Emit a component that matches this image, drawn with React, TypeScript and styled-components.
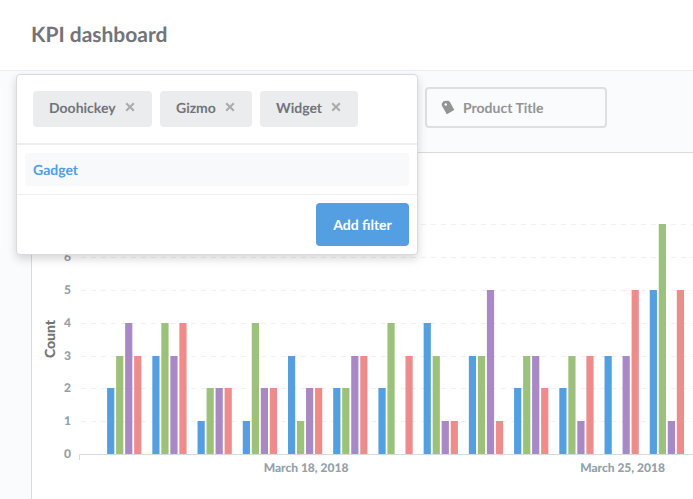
import React from "react";
import styled, { createGlobalStyle } from "styled-components";

const GlobalStyle = createGlobalStyle`
  *, *::before, *::after { box-sizing: border-box; }
  body {
    margin: 0;
    overflow: hidden;
    background: #f9fbfc;
    font-family: Lato, "Liberation Sans", sans-serif;
    font-weight: 700;
    text-rendering: geometricPrecision;
  }
`;

const Page = styled.div`
  position: relative;
  width: 693px;
  height: 499px;
  overflow: hidden;
  display: flex;
  flex-direction: column;
  background: #f9fbfc;
`;

const Header = styled.header`
  flex: none;
  height: 71px;
  padding: 22px 31px 0;
  background: #fff;
  border-bottom: 1px solid #edeeef;
`;

const Title = styled.h1`
  margin: 0;
  font-size: 21px;
  line-height: 26px;
  color: #727479;
`;

const FilterBar = styled.div`
  flex: none;
  height: 81px;
  padding-top: 16px;
  padding-left: 425px;
`;

const FilterField = styled.div`
  display: flex;
  align-items: center;
  gap: 8px;
  width: 182px;
  height: 41px;
  padding-left: 14px;
  border: 2px solid #dddfe0;
  border-radius: 4px;
  font-size: 14px;
  color: #949494;
`;

const Card = styled.section`
  flex: 1;
  margin-left: 31px;
  border: solid #d9dadb;
  border-width: 1px 0 0 1px;
  background: #fff;
`;

const Chart = styled.svg`
  display: block;
  font-family: Lato, "Liberation Sans", sans-serif;
  font-weight: 900;
`;

const Popover = styled.div`
  position: absolute;
  left: 16px;
  top: 74px;
  width: 402px;
  height: 181px;
  background: #fff;
  border: 1px solid #d9dadb;
  border-radius: 4px;
  box-shadow: 0 4px 10px rgba(0, 0, 0, 0.16);
`;

const Chips = styled.div`
  display: flex;
  gap: 8px;
  height: 70px;
  padding: 16px 16px 0;
  border-bottom: 2px solid #eeeff0;
`;

const Chip = styled.div<{ $width: number }>`
  display: flex;
  justify-content: space-between;
  width: ${(p) => p.$width}px;
  height: 36px;
  padding: 0 17px 0 16px;
  line-height: 34px;
  border-radius: 4px;
  background: #ebecee;
  color: #727479;
  font-size: 14px;
`;

const CloseIcon = styled.svg`
  display: block;
  margin-top: 11px;
`;

const Options = styled.div`
  height: 50px;
  padding: 8px;
  border-bottom: 1px solid #edeeef;
`;

const Option = styled.div`
  height: 33px;
  padding-left: 8px;
  border-radius: 4px;
  background: #f8f9fb;
  color: #519ee3;
  font-size: 14px;
  line-height: 34px;
`;

const Footer = styled.div`
  display: flex;
  justify-content: flex-end;
  padding: 8px;
`;

const AddButton = styled.button`
  width: 93px;
  height: 43px;
  padding: 0;
  border: 0;
  border-radius: 4px;
  background: #549fe1;
  color: #fff;
  font: 700 14px/43px Lato, "Liberation Sans", sans-serif;
  text-rendering: geometricPrecision;
`;

const COLORS = ["#549fe1", "#9cc17b", "#a889c5", "#ee8c8c"];
const LEVELS = [454, 421, 388, 356, 323, 290, 257, 224];
const GROUPS = [
  [2, 3, 4, 3],
  [3, 4, 3, 4],
  [1, 2, 2, 2],
  [1, 4, 2, 2],
  [3, 1, 2, 2],
  [2, 2, 3, 3],
  [2, 4, 0, 3],
  [4, 3, 1, 1],
  [3, 3, 5, 1],
  [2, 3, 3, 2],
  [2, 3, 1, 3],
  [3, 0, 3, 5],
  [5, 7, 1, 5],
];

const SELECTED = [
  { label: "Doohickey", width: 119 },
  { label: "Gizmo", width: 92 },
  { label: "Widget", width: 98 },
];

function CountChart() {
  return (
    <Chart width="661" height="346" viewBox="32 153 661 346">
      {LEVELS.slice(1).map((y) => (
        <line key={y} x1="81" x2="693" y1={y + 0.5} y2={y + 0.5} stroke="#f1f1f1" strokeDasharray="5 5" />
      ))}
      {LEVELS.map((y, value) => (
        <text key={y} x="71" y={y + 4} textAnchor="end" fontSize="12" fill="#93a1ab">
          {value}
        </text>
      ))}
      {GROUPS.map((group, g) =>
        group.map((value, s) => (
          <rect
            key={`${g}-${s}`}
            x={107.1 + g * 45.22 + s * 9.02}
            y={LEVELS[value]}
            width="7.2"
            height={454 - LEVELS[value]}
            fill={COLORS[s]}
          />
        ))
      )}
      <path d="M79.5 460V454.5H693" fill="none" stroke="#d5dcdf" />
      <text x="306" y="472" textAnchor="middle" fontSize="12" fill="#93a1ab">
        March 18, 2018
      </text>
      <text x="622.5" y="472" textAnchor="middle" fontSize="12" fill="#93a1ab">
        March 25, 2018
      </text>
      <text transform="translate(55 339) rotate(-90)" textAnchor="middle" fontSize="14" fill="#727479">
        Count
      </text>
    </Chart>
  );
}

export default function App() {
  return (
    <>
      <GlobalStyle />
      <Page>
        <Header>
          <Title>KPI dashboard</Title>
        </Header>
        <FilterBar>
          <FilterField>
            <svg width="14" height="15" viewBox="0 0 14 15">
              <path
                fillRule="evenodd"
                fill="#949494"
                d="M2.8 1L7.4.8L9 2L13.3 9.9L5.8 14.2L.8 5.6V3.6ZM4.7 3.2a1.3 1.3 0 1 0 .1 2.6a1.3 1.3 0 0 0-.1-2.6Z"
              />
            </svg>
            <span>Product Title</span>
          </FilterField>
        </FilterBar>
        <Card>
          <CountChart />
        </Card>
        <Popover>
          <Chips>
            {SELECTED.map(({ label, width }) => (
              <Chip key={label} $width={width}>
                {label}
                <CloseIcon width="10" height="10" viewBox="0 0 10 10">
                  <path d="M1.2 1.2L8.8 8.8M8.8 1.2L1.2 8.8" stroke="#a9abac" strokeWidth="2.1" />
                </CloseIcon>
              </Chip>
            ))}
          </Chips>
          <Options>
            <Option>Gadget</Option>
          </Options>
          <Footer>
            <AddButton>Add filter</AddButton>
          </Footer>
        </Popover>
      </Page>
    </>
  );
}
